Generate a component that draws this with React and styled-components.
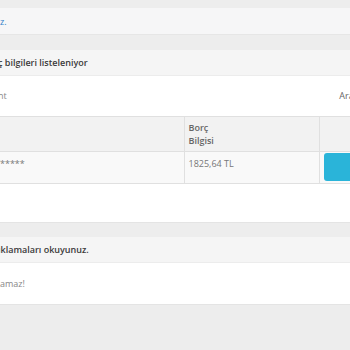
import React, { useLayoutEffect, useRef, useState } from 'react';
import styled, { createGlobalStyle } from 'styled-components';

// Sayfa genel stilleri
const GlobalStyle = createGlobalStyle`
  html, body {
    margin: 0;
    padding: 0;
    background: #ededed;
    overflow: hidden;
  }
  body {
    font-family: "Open Sans", "Liberation Sans", sans-serif;
    font-size: 9px;
    line-height: 13px;
    color: #777;
  }
`;

const Page = styled.div`
  width: 550px;
  margin-left: -150px;
  padding-top: 8px;
  display: flex;
  flex-direction: column;
`;

const Alert = styled.div`
  background: #f6f6f7;
  border-bottom: 1px solid #e6e6e6;
  padding: 7px 10px 6px;
  color: #2f80c8;
  margin-bottom: 15px;
  white-space: nowrap;
`;

const Panel = styled.section`
  background: #fff;
  border-bottom: 1px solid #e4e4e4;
  margin-bottom: ${(p) => p.$gap || 0}px;
`;

const PanelHeading = styled.div`
  background: #f5f5f5;
  border-bottom: 1px solid #ececec;
  padding: 6px 10px 6px;
  font-weight: 600;
  color: #3a3a3a;
  white-space: nowrap;
`;

const PanelBody = styled.div`
  padding: ${(p) => p.$pad};
`;

const Toolbar = styled.div`
  display: flex;
  justify-content: space-between;
  align-items: center;
  height: 13px;
  margin-bottom: 14px;
  color: #888;
  white-space: nowrap;
`;

const Search = styled.label`
  display: flex;
  align-items: center;
  gap: 4px;
  color: #666;
`;

const SearchInput = styled.input`
  width: 30px;
  height: 13px;
  border: 1px solid #ddd;
  padding: 0;
  box-sizing: border-box;
`;

const Table = styled.table`
  width: 530px;
  table-layout: fixed;
  border-collapse: collapse;
`;

const Row = styled.tr`
  background: ${(p) => (p.$head ? '#f2f2f2' : '#f9f9f9')};
`;

const Cell = styled.td`
  border: 1px solid #e0e0e0;
  padding: ${(p) => p.$pad || '4px 3.5px'};
  vertical-align: top;
  color: ${(p) => (p.$head ? '#666' : '#777')};
  font-weight: ${(p) => (p.$head ? 600 : 400)};
  white-space: nowrap;
  overflow: hidden;
`;

const HeadLabel = styled.span`
  display: block;
  width: min-content;
  white-space: normal;
`;

const PayButton = styled.button`
  display: block;
  width: 70px;
  height: 28px;
  border: 0;
  border-radius: 3px;
  background: #2ab4d9;
  color: #fff;
  font: inherit;
  text-align: left;
  padding-left: 32px;
`;

const Note = styled.div`
  color: #888;
  white-space: nowrap;
`;

const Line = styled.div`
  white-space: nowrap;
`;

// Soldan kırpılmış metin: kuyruk kısmını verilen x konumuna hizalar
const Clipped = ({ head, tail, x = 0 }) => {
  const tailRef = useRef(null);
  const [indent, setIndent] = useState(0);
  useLayoutEffect(() => {
    const fit = () => {
      if (!tailRef.current) return;
      const left = tailRef.current.getBoundingClientRect().left;
      setIndent((i) => i + (x - left));
    };
    fit();
    // fontlar yüklendikten sonra tekrar ölç
    if (document.fonts) document.fonts.ready.then(() => requestAnimationFrame(fit));
  }, [x]);
  return (
    <Line style={{ textIndent: indent }}>
      {head}
      <span ref={tailRef}>{tail}</span>
    </Line>
  );
};

const App = () => {
  return (
    <>
      <GlobalStyle />
      <Page>
        <Alert>
          <Clipped head="Borç ödeme işlemleriniz ile ilgili detaylı bilgi için lütfen tıklayını" tail="z." x={0} />
        </Alert>

        <Panel $gap={14}>
          <PanelHeading>
            <Clipped head="Sistemde kayıtlı aboneliğinize ait bor" tail="ç bilgileri listeleniyor" x={-2} />
          </PanelHeading>
          <PanelBody $pad="13px 10px 38px">
            <Toolbar>
              <Clipped head="Kopyala Excel PDF Pri" tail="nt" x={-2} />
              <Search>
                Ara:
                <SearchInput />
              </Search>
            </Toolbar>
            <Table>
              <colgroup>
                <col style={{ width: 324 }} />
                <col style={{ width: 135 }} />
                <col style={{ width: 71 }} />
              </colgroup>
              <tbody>
                <Row $head>
                  <Cell $head>Abone Adı</Cell>
                  <Cell $head>
                    <HeadLabel>Borç Bilgisi</HeadLabel>
                  </Cell>
                  <Cell $head />
                </Row>
                <Row>
                  <Cell $pad="5px 3.5px">
                    <Clipped head="AHMET Y" tail="*****" x={0} />
                  </Cell>
                  <Cell $pad="5px 3.5px">1825,64 TL</Cell>
                  <Cell $pad="1px 3.5px 2px">
                    <PayButton>Öde</PayButton>
                  </Cell>
                </Row>
              </tbody>
            </Table>
          </PanelBody>
        </Panel>

        <Panel>
          <PanelHeading>
            <Clipped head="Ödeme yapmadan önce lütfen açı" tail="klamaları okuyunuz." x={0.5} />
          </PanelHeading>
          <PanelBody $pad="14px 10px">
            <Note>
              <Clipped head="Son ödeme tarihi geçmiş borçlar için kısmi ödeme yapıl" tail="amaz!" x={0} />
            </Note>
          </PanelBody>
        </Panel>
      </Page>
    </>
  );
};

export default App;
